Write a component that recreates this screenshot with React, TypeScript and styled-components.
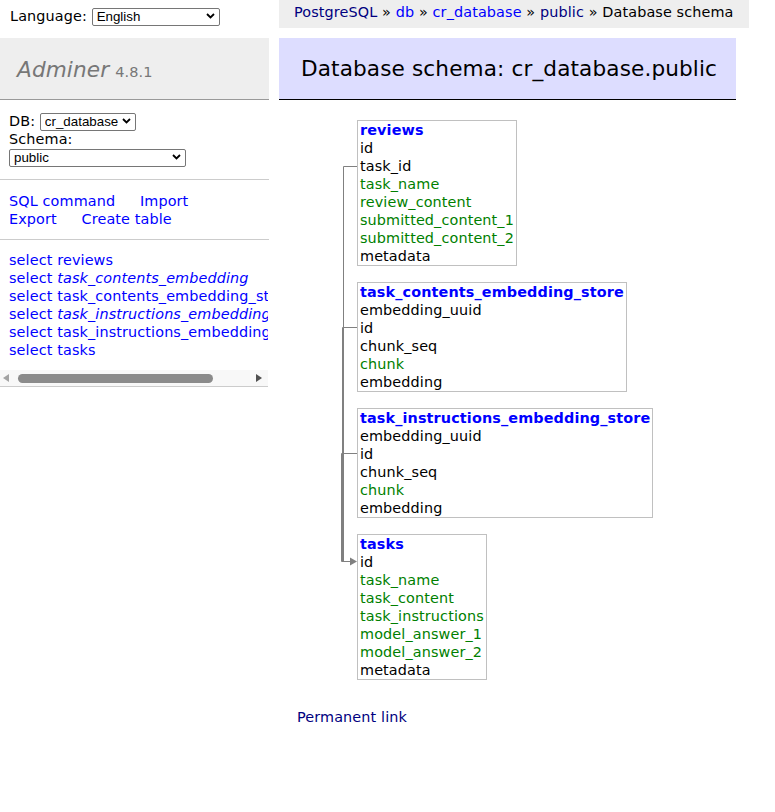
import * as React from "react";
import styled, { createGlobalStyle } from "styled-components";

const GlobalStyle = createGlobalStyle`
  body {
    margin: 0;
    background: #fff;
    color: #000;
    font: 14.4px/18px "DejaVu Sans", Verdana, sans-serif;
    letter-spacing: 0.12px;
  }
`;

const Page = styled.div`
  display: grid;
  grid-template-columns: 269px 457px;
  column-gap: 10px;
  align-items: start;
`;

const Sidebar = styled.div`
  display: flex;
  flex-direction: column;
`;

const LangBar = styled.div`
  height: 38px;
  box-sizing: border-box;
  padding: 7px 10px 0;
  white-space: nowrap;
`;

const SelectWrap = styled.span<{ $w: number }>`
  position: relative;
  display: inline-block;
  vertical-align: top;
  width: ${(p) => p.$w}px;
  height: 18px;
  letter-spacing: 0;
`;

const SelectBox = styled.select`
  appearance: none;
  box-sizing: border-box;
  width: 100%;
  height: 100%;
  margin: 0;
  padding: 0 0 0 4px;
  border: 1px solid #767676;
  border-radius: 2px;
  background: #fff;
  color: #000;
  font: 13.33px/16px "Liberation Sans", Arial, sans-serif;
`;

const Chevron = styled.svg`
  position: absolute;
  right: 5px;
  top: 6px;
  pointer-events: none;
`;

const Select = ({ width, value }: { width: number; value: string }) => (
  <SelectWrap $w={width}>
    <SelectBox defaultValue={value}>
      <option>{value}</option>
    </SelectBox>
    <Chevron width="9" height="6" viewBox="0 0 9 6">
      <path d="M1 1 L4.5 4.5 L8 1" fill="none" stroke="#000" strokeWidth="1.8" />
    </Chevron>
  </SelectWrap>
);

const Logo = styled.h1`
  margin: 0;
  height: 62px;
  box-sizing: border-box;
  padding: 0 17px;
  display: flex;
  align-items: center;
  gap: 6px;
  background: #eee;
  border-bottom: 1px solid #999;
  font-weight: normal;
  color: #777;
`;

const LogoLink = styled.a`
  font-size: 21.6px;
  font-style: italic;
  color: #777;
  text-decoration: none;
  margin-top: 2px;
`;

const Version = styled.span`
  font-size: 14.5px;
  color: #777;
  margin-top: 6px;
`;

const MenuBlock = styled.div<{ $bottom: number }>`
  padding: 12px 9px ${(p) => p.$bottom}px;
  border-bottom: 1px solid #ccc;
`;

const Link = styled.a<{ $visited?: boolean }>`
  color: ${(p) => (p.$visited ? "navy" : "blue")};
  text-decoration: none;
`;

const MenuLink = styled(Link)`
  white-space: nowrap;
  margin-right: 20px;
`;

const Line = styled.div`
  white-space: nowrap;
`;

const TableBlock = styled.div`
  border-bottom: 1px solid #ccc;
  width: 268px;
`;

const TableNames = styled.ul`
  list-style: none;
  margin: 0;
  padding: 11px 0 11px 9px;
  overflow: hidden;
  white-space: nowrap;
`;

const ViewName = styled.i`
  font-style: italic;
`;

const ScrollTrack = styled.div`
  height: 16px;
  display: flex;
  align-items: center;
  justify-content: space-between;
  padding: 0 6px 0 3px;
  background: #f8f8f8;
`;

const ScrollArrow = styled.span<{ $dir: "left" | "right"; $on?: boolean }>`
  width: 0;
  height: 0;
  border-top: 4px solid transparent;
  border-bottom: 4px solid transparent;
  ${(p) =>
    p.$dir === "left"
      ? `border-right: 6px solid ${p.$on ? "#505050" : "#a3a3a3"};`
      : `border-left: 6px solid ${p.$on ? "#505050" : "#a3a3a3"};`}
`;

const ScrollThumb = styled.span`
  height: 9px;
  width: 195px;
  margin-left: 9px;
  margin-right: auto;
  border-radius: 5px;
  background: #8b8b8b;
`;

const Main = styled.div`
  display: flex;
  flex-direction: column;
`;

const TopRow = styled.div`
  height: 38px;
`;

const Breadcrumb = styled.p`
  display: inline-block;
  margin: 0;
  height: 28px;
  padding: 0 15px;
  line-height: 25px;
  white-space: nowrap;
  background: #eee;
`;

const Heading = styled.h2`
  margin: 0 0 20px;
  height: 62px;
  box-sizing: border-box;
  padding: 0 22px;
  display: flex;
  align-items: center;
  background: #ddf;
  border-bottom: 1px solid #000;
  font-size: 21.6px;
  font-weight: normal;
  color: #000;
  white-space: nowrap;
`;

const Content = styled.div`
  padding-left: 18px;
`;

const Schema = styled.div`
  position: relative;
  margin-left: 60px;
  height: 574px;
  display: flex;
  flex-direction: column;
  align-items: flex-start;
  gap: 16px;
`;

const Connectors = styled.svg`
  position: absolute;
  left: -20px;
  top: 0;
  overflow: visible;
`;

const TableCard = styled.div`
  border: 1px solid silver;
  padding: 0 2px;
  white-space: nowrap;
`;

const TableTitle = styled.a`
  display: block;
  color: blue;
  font-weight: bold;
  text-decoration: none;
`;

const Field = styled.div<{ $char?: boolean }>`
  color: ${(p) => (p.$char ? "#007f00" : "#000")};
`;

const Permalink = styled.p`
  margin: 14px 0;
`;

type Col = [string, boolean?];

const tables: { name: string; cols: Col[] }[] = [
  {
    name: "reviews",
    cols: [
      ["id"],
      ["task_id"],
      ["task_name", true],
      ["review_content", true],
      ["submitted_content_1", true],
      ["submitted_content_2", true],
      ["metadata"],
    ],
  },
  {
    name: "task_contents_embedding_store",
    cols: [["embedding_uuid"], ["id"], ["chunk_seq"], ["chunk", true], ["embedding"]],
  },
  {
    name: "task_instructions_embedding_store",
    cols: [["embedding_uuid"], ["id"], ["chunk_seq"], ["chunk", true], ["embedding"]],
  },
  {
    name: "tasks",
    cols: [
      ["id"],
      ["task_name", true],
      ["task_content", true],
      ["task_instructions", true],
      ["model_answer_1", true],
      ["model_answer_2", true],
      ["metadata"],
    ],
  },
];

const menuTables: { name: string; view?: boolean }[] = [
  { name: "reviews" },
  { name: "task_contents_embedding", view: true },
  { name: "task_contents_embedding_store" },
  { name: "task_instructions_embedding", view: true },
  { name: "task_instructions_embedding_store" },
  { name: "tasks" },
];

export default function App() {
  return (
    <>
      <GlobalStyle />
      <Page>
        <Sidebar>
          <LangBar>
            Language: <Select width={128} value="English" />
          </LangBar>
          <Logo>
            <LogoLink href="#">Adminer</LogoLink>
            <Version>4.8.1</Version>
          </Logo>
          <MenuBlock $bottom={13}>
            <Line>
              DB: <Select width={96} value="cr_database" />
            </Line>
            <Line>Schema:</Line>
            <Line>
              <Select width={177} value="public" />
            </Line>
          </MenuBlock>
          <MenuBlock $bottom={11}>
            <Line>
              <MenuLink href="#">SQL command</MenuLink> <MenuLink href="#">Import</MenuLink>
            </Line>
            <Line>
              <MenuLink href="#">Export</MenuLink> <MenuLink href="#">Create table</MenuLink>
            </Line>
          </MenuBlock>
          <TableBlock>
            <TableNames>
              {menuTables.map((t) => (
                <li key={t.name}>
                  <Link href="#">select</Link>{" "}
                  <Link href="#">{t.view ? <ViewName>{t.name}</ViewName> : t.name}</Link>
                </li>
              ))}
            </TableNames>
            <ScrollTrack>
              <ScrollArrow $dir="left" />
              <ScrollThumb />
              <ScrollArrow $dir="right" $on />
            </ScrollTrack>
          </TableBlock>
        </Sidebar>
        <Main>
          <TopRow>
            <Breadcrumb>
              <Link href="#" $visited>PostgreSQL</Link> » <Link href="#">db</Link> »{" "}
              <Link href="#">cr_database</Link> » <Link href="#" $visited>public</Link> » Database
              schema
            </Breadcrumb>
          </TopRow>
          <Heading>Database schema: cr_database.public</Heading>
          <Content>
            <Schema>
              <Connectors width="20" height="460" viewBox="0 0 20 460">
                <g fill="none" stroke="#808080" strokeWidth="1">
                  <path d="M20 46.5 H6.5 V441.5" />
                  <path d="M20 207.5 H5.5 V441.5" />
                  <path d="M20 333.5 H4.5 V441.5 H14" />
                </g>
                <polygon points="13,437.5 20,441.5 13,445.5" fill="#808080" />
              </Connectors>
              {tables.map((t) => (
                <TableCard key={t.name}>
                  <TableTitle href="#">{t.name}</TableTitle>
                  {t.cols.map(([c, ch]) => (
                    <Field key={c} $char={ch}>
                      {c}
                    </Field>
                  ))}
                </TableCard>
              ))}
            </Schema>
            <Permalink>
              <Link href="#" $visited>Permanent link</Link>
            </Permalink>
          </Content>
        </Main>
      </Page>
    </>
  );
}
